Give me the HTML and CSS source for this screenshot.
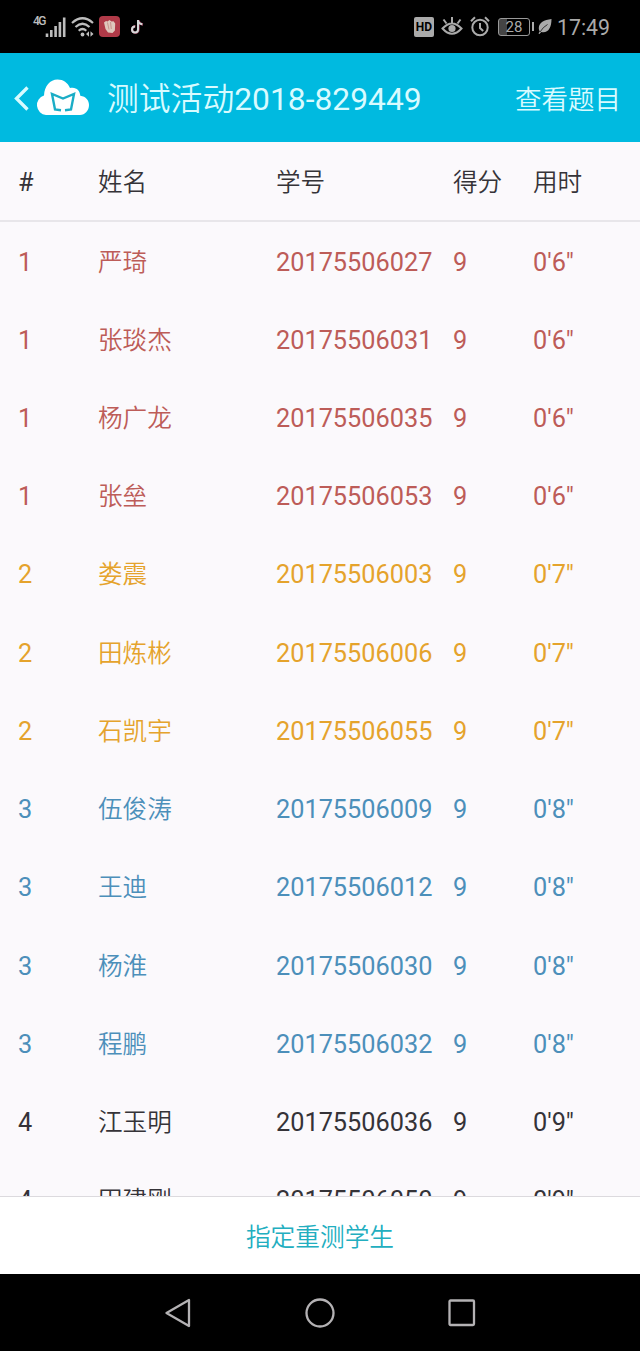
FILE: index.html
```html
<!DOCTYPE html>
<html lang="zh-CN">
  <head>
    <meta charset="UTF-8" />
    <meta name="viewport" content="width=device-width, initial-scale=1.0" />
    <title>测试活动2018-829449</title>
    <link rel="stylesheet" href="styles.css">
  </head>

  <body>
    <div class="status">
      <div class="status_left">
        <span class="network">4G</span>
        <svg class="signal" width="22" height="22" viewBox="0 0 22 22">
          <path d="M2 17.5v3.5M6.3 14v7M10.6 10v11M14.9 6v15M19.2 1.500v19.5" stroke="#bdbdbd" stroke-width="2.6" />
        </svg>
        <svg class="wifi" width="24" height="22" viewBox="0 0 24 22" fill="none" stroke="#bdbdbd" stroke-width="2.2">
          <path d="M1 7Q11.500 -2.500 22 7M4.500 11Q11.500 4.500 18.500 11M7.700 14.700Q11.500 11.300 15.300 14.700" />
          <circle cx="11.5" cy="18.5" r="1.900" fill="#bdbdbd" stroke="none" />
          <path d="M15 18l3-2.800v5.600zM19.500 15.200l3 2.800-3 2.800z" fill="#bdbdbd" stroke="none" />
        </svg>
        <svg class="app_red" width="21" height="21" viewBox="0 0 21 21">
          <rect width="21" height="21" rx="4" fill="#b03a48" />
          <path d="M5 6.500l2-1.500 1.500.5L10.500 4l2 1.500 2-.3 1.700 2.300-.3 7-2.400 2.500-4.500-.5L6.500 13z" fill="#dfc8bd" />
          <path d="M8.500 6.500l1.500 7M11.500 6l.8 7" stroke="#bc7c7a" stroke-width=".7" />
        </svg>
        <svg width="16" height="21" viewBox="0 0 16 21" fill="none" stroke-width="2.500">
          <path d="M8.500 4v9.500a3.200 3.200 0 1 1-3-3.200M8.500 5c.6 2 2 3.300 4.500 3.500" stroke="#8b3650" />
          <path d="M8 4v9.500a3 3 0 1 1-3-3M8 5c.6 2 2 3 4.300 3.200" stroke="#d5d9d9" stroke-width="2" />
        </svg>
      </div>
      <div class="status_right">
        <span class="hd">HD</span>
        <svg class="eye" width="22" height="20" viewBox="0 0 22 20" fill="none" stroke="#aaa" stroke-width="2">
          <path d="M1.500 11.500Q11 1.500 20.500 11.500Q11 22 1.500 11.500zM11 6V0M5.500 6.500L2.500 2.500M16.500 6.500l3-4" />
          <circle cx="11" cy="11.500" r="3.600" fill="#aaa" stroke="none" />
        </svg>
        <svg class="alarm" width="20" height="21" viewBox="0 0 20 21" fill="none" stroke="#aaa" stroke-width="2">
          <circle cx="10" cy="11.500" r="7.700" />
          <path d="M1 5.300L5 1.300M19 5.300L15 1.300M10 7v5l3.200 3" />
        </svg>
        <span class="battery">28</span>
        <span class="battery_tip"></span>
        <svg class="leaf" width="14" height="15" viewBox="0 0 14 15">
          <path d="M13.500 0C6 1 1 3.500.8 9c0 1.500.4 2.500 1 3.300L.5 14.500l1 .5 1.800-2C10 14.500 13.500 9 13.500 0z" fill="#aaa" />
          <path d="M2 13Q5 8 9.500 5.500" stroke="#000" stroke-width=".7" fill="none" />
        </svg>
        <span class="clock">17:49</span>
      </div>
    </div>

    <div class="header">
      <svg class="back" width="15" height="25" viewBox="0 0 15 25" fill="none">
        <path d="M13.500 1.500L2.500 12.500l11 11" stroke="#d8fbff" stroke-width="3.300" />
      </svg>
      <svg class="logo" width="54" height="36" viewBox="0 0 54 36">
        <path d="M10 36A10 10 0 0 1 8 16.500C8.500 7 14 .5 21.500.5c6 0 10 3 12.500 8.500 6-1.500 10 2.500 10.300 7.800C50 17.500 53 21.500 53 26c0 5.500-4 10-9 10z" fill="#fff" />
        <path d="M25 31.200l-6-.7-3-15.500 11 4.500L38 15l-3 15.500-6 .7" fill="none" stroke="#1badc6" stroke-width="2.400" />
      </svg>
      <div class="title">测试活动<b>2018-829449</b></div>
      <div class="action">查看题目</div>
    </div>

    <div class="list">
      <div class="row head"><b>#</b><span>姓名</span><span>学号</span><span>得分</span><span>用时</span></div>
      <div class="row red"><b>1</b><span>严琦</span><b>20175506027</b><b>9</b><b>0'6"</b></div>
      <div class="row red"><b>1</b><span>张琰杰</span><b>20175506031</b><b>9</b><b>0'6"</b></div>
      <div class="row red"><b>1</b><span>杨广龙</span><b>20175506035</b><b>9</b><b>0'6"</b></div>
      <div class="row red"><b>1</b><span>张垒</span><b>20175506053</b><b>9</b><b>0'6"</b></div>
      <div class="row orange"><b>2</b><span>娄震</span><b>20175506003</b><b>9</b><b>0'7"</b></div>
      <div class="row orange"><b>2</b><span>田炼彬</span><b>20175506006</b><b>9</b><b>0'7"</b></div>
      <div class="row orange"><b>2</b><span>石凯宇</span><b>20175506055</b><b>9</b><b>0'7"</b></div>
      <div class="row blue"><b>3</b><span>伍俊涛</span><b>20175506009</b><b>9</b><b>0'8"</b></div>
      <div class="row blue"><b>3</b><span>王迪</span><b>20175506012</b><b>9</b><b>0'8"</b></div>
      <div class="row blue"><b>3</b><span>杨淮</span><b>20175506030</b><b>9</b><b>0'8"</b></div>
      <div class="row blue"><b>3</b><span>程鹏</span><b>20175506032</b><b>9</b><b>0'8"</b></div>
      <div class="row"><b>4</b><span>江玉明</span><b>20175506036</b><b>9</b><b>0'9"</b></div>
      <div class="row"><b>4</b><span>田建刚</span><b>20175506050</b><b>9</b><b>0'9"</b></div>
    </div>

    <div class="retest">指定重测学生</div>

    <div class="navbar">
      <svg width="26" height="30" viewBox="0 0 26 30">
        <path d="M24 2v26L1.500 15z" />
      </svg>
      <svg width="30" height="30" viewBox="0 0 30 30">
        <circle cx="15" cy="15" r="13.500" />
      </svg>
      <svg width="28" height="28" viewBox="0 0 28 28">
        <rect x="1.500" y="1.500" width="24.500" height="24.500" rx="1" />
      </svg>
    </div>
  </body>
</html>
```
FILE: styles.css
```css
* {
  box-sizing: border-box;
}

body {
  margin: 0;
  height: 1351px;
  display: flex;
  flex-direction: column;
  overflow: hidden;
  background-color: #fbf9fc;
  color: #353338;
  font-family: Roboto, "Noto Sans CJK SC", sans-serif;
}

svg {
  display: block;
  flex: none;
}

/* status bar */
.status {
  height: 53px;
  flex: none;
  display: flex;
  justify-content: space-between;
  padding: 0 31px 0 33px;
  background-color: #000;
  color: #aaa;
}
.status_left,
.status_right {
  display: flex;
  align-items: center;
}
.network {
  width: 12px;
  margin-top: -12px;
  font-size: 12px;
  font-weight: 500;
  letter-spacing: -1.5px;
  color: #bdbdbd;
}
.wifi {
  margin-left: 4px;
}
.app_red {
  margin: 0 10px 0 4px;
}
.hd {
  width: 20px;
  height: 20px;
  border-radius: 2px;
  background-color: #aaa;
  color: #000;
  font-size: 12px;
  font-weight: 700;
  line-height: 20px;
  text-align: center;
}
.eye {
  margin-left: 7px;
}
.alarm {
  margin-left: 7px;
}
.battery {
  width: 32px;
  height: 18px;
  margin-left: 8px;
  border: 1.5px solid #999;
  border-radius: 3px;
  background: linear-gradient(90deg, #444 8px, #000 8px);
  font-size: 15px;
  line-height: 16px;
  text-align: center;
}
.battery_tip {
  width: 2px;
  height: 9px;
  margin-left: 2px;
  background-color: #aaa;
}
.leaf {
  margin-left: 4px;
}
.clock {
  width: 52px;
  margin-left: 5px;
  padding-top: 1px;
  font-size: 21.3px;
}

/* title bar */
.header {
  height: 89px;
  flex: none;
  display: flex;
  align-items: center;
  padding: 0 19px 0 14px;
  background-color: #00bae0;
  color: #d8fbff;
}
.back {
  margin-top: 2px;
}
.logo {
  margin: 0 0 2px 7px;
}
.title {
  margin-left: 17px;
  padding-bottom: 3px;
  font-size: 31.8px;
  font-weight: 350;
}
.title b {
  font-weight: 400;
}
.action {
  margin-left: auto;
  font-size: 26.5px;
  font-weight: 350;
}

/* result list */
.list {
  flex: 1;
  min-height: 0;
  overflow: hidden;
}
.row {
  display: grid;
  grid-template-columns: 80px 178px 177px 80px 1fr;
  align-items: center;
  height: 78.22px;
  padding: 3px 0 0 18px;
  font-size: 24.6px;
  line-height: 36px;
}
.row span {
  font-weight: 350;
}
.row b {
  font-size: 25.3px;
  font-weight: 400;
}
.head {
  height: 80px;
  padding-top: 4px;
  border-bottom: 2px solid #e8e6ea;
}
.red {
  color: #bd5c58;
}
.orange {
  color: #e5a32c;
}
.blue {
  color: #4c8fba;
}

.retest {
  height: 78px;
  flex: none;
  padding-top: 2px;
  border-top: 1px solid #dcdade;
  background-color: #fff;
  color: #22aebf;
  font-size: 24.7px;
  font-weight: 350;
  line-height: 77px;
  text-align: center;
}

/* system buttons */
.navbar {
  height: 77px;
  flex: none;
  display: flex;
  align-items: center;
  justify-content: space-between;
  padding: 0 164px 0 165px;
  background-color: #000;
}
.navbar svg {
  fill: none;
  stroke: #b4b2b4;
  stroke-width: 2.3;
  stroke-linejoin: round;
}
```
